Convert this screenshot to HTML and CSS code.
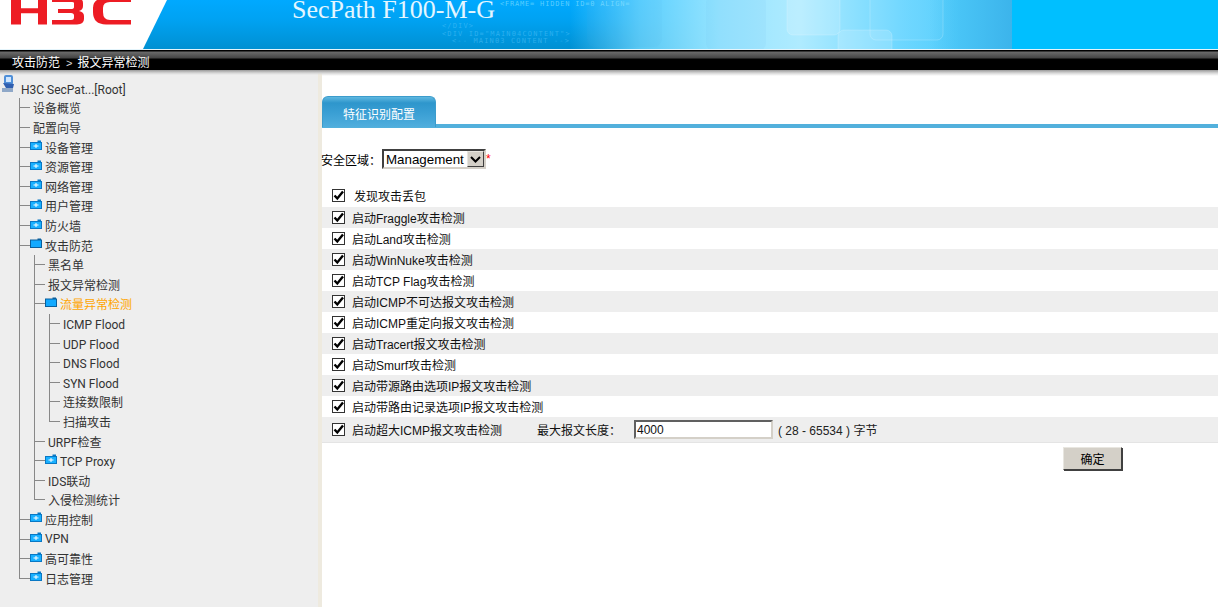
FILE: index.html
```html
<!DOCTYPE html>
<html lang="zh">
<head>
<meta charset="utf-8">
<title>SecPath F100-M-G</title>
<link rel="stylesheet" href="styles.css">
</head>
<body>
<svg class="defs" width="0" height="0" aria-hidden="true">
  <symbol id="closed" viewBox="0 0 12 10">
    <path d="M0 2h7.500V0.500h3.500V2h1v8H0z" fill="#0a78c4"/>
    <path d="M1 3h10v6H1z" fill="#19b0ff"/>
    <path d="M3.500 6h5M6 4v4" stroke="#fff" stroke-width="1" fill="none"/>
  </symbol>
  <symbol id="open" viewBox="0 0 12 10">
    <path d="M0 1.500h7.500V0.500h3.500v1h1V10H0z" fill="#0a5f9c"/>
    <path d="M1 2.500h10V9H1z" fill="#12a9ff"/>
  </symbol>
  <symbol id="tick" viewBox="0 0 11 11">
    <path d="M1.500 5.500l2.800 3L10 1.500" fill="none" stroke="#000" stroke-width="2.400"/>
  </symbol>
</svg>
<header class="banner">
  <div class="logo-area">
    <svg class="logo" viewBox="0 0 140 26" width="140" height="26" aria-label="H3C">
      <path d="M11-2h10V8.300h17V-2h9v26.400h-9V13.300H21v11.100H11z" fill="#ed1c24"/>
      <path d="M52-2h24q7 0 7 5v3q0 4-4 5 5 1 5 5v3q0 5.400-7 5.400H52v-4.400h19q3 0 3-2.500v-2q0-2.500-3-2.500H58V9h13q3 0 3-2V3q0-1-2-1H52z" fill="#ed1c24"/>
      <path d="M131-2H106Q93-2 93 8v4q0 12.400 13 12.400h25V20H110q-7 0-7-8V8q0-6 7-6h21z" fill="#ed1c24"/>
    </svg>
  </div>
  <div class="art">
    <svg class="art-shapes" width="500" height="49" aria-hidden="true">
      <rect class="shade" x="67" y="-5" width="75" height="52" rx="8"/>
      <rect class="shade" x="186" y="-5" width="60" height="56" rx="8"/>
      <rect class="glow" x="267" y="-10" width="53" height="45" rx="6"/>
      <rect class="glow" x="318" y="30" width="54" height="30" rx="6"/>
      <rect class="line" x="350" y="-10" width="73" height="50" rx="6"/>
    </svg>
    <div class="code-top">&lt;FRAME= HIDDEN ID=0 ALIGN=</div>
    <div class="code-text">
      <div>&lt;/DIV&gt;</div>
      <div>&lt;DIV ID="MAIN04CONTENT"&gt;</div>
      <div class="indent">&lt;-- MAIN03 CONTENT --&gt;</div>
    </div>
    <div class="device">SecPath F100-M-G</div>
  </div>
</header>
<nav class="crumbs"><span>攻击防范</span><span class="sep">&gt;</span><span>报文异常检测</span></nav>
<div class="layout">
  <aside class="sidebar">
    <div class="root-row">
      <svg class="root-icon" viewBox="0 0 12 17" width="12" height="17" aria-hidden="true">
        <rect x="2" y="0" width="9" height="10" rx="2" fill="#4f8fd8"/>
        <rect x="4" y="2" width="5" height="5" fill="#cfe6ff"/>
        <path d="M1 8l3 5h7l1-4z" fill="#2f5fb0"/>
        <path d="M0 13h11v4H0z" fill="#8fa8c8"/>
      </svg>
      <span class="root-label">H3C SecPat...[Root]</span>
    </div>
    <ul class="tree lvl1">
      <li><div class="row"><span class="txt">设备概览</span></div></li>
      <li><div class="row"><span class="txt">配置向导</span></div></li>
      <li><div class="row"><svg class="fld"><use href="#closed"/></svg><span class="txt">设备管理</span></div></li>
      <li><div class="row"><svg class="fld"><use href="#closed"/></svg><span class="txt">资源管理</span></div></li>
      <li><div class="row"><svg class="fld"><use href="#closed"/></svg><span class="txt">网络管理</span></div></li>
      <li><div class="row"><svg class="fld"><use href="#closed"/></svg><span class="txt">用户管理</span></div></li>
      <li><div class="row"><svg class="fld"><use href="#closed"/></svg><span class="txt">防火墙</span></div></li>
      <li>
        <div class="row"><svg class="fld"><use href="#open"/></svg><span class="txt">攻击防范</span></div>
        <ul class="tree lvl2">
          <li><div class="row"><span class="txt">黑名单</span></div></li>
          <li><div class="row"><span class="txt">报文异常检测</span></div></li>
          <li>
            <div class="row"><svg class="fld"><use href="#open"/></svg><span class="txt active">流量异常检测</span></div>
            <ul class="tree lvl3">
              <li><div class="row"><span class="txt latin">ICMP Flood</span></div></li>
              <li><div class="row"><span class="txt latin">UDP Flood</span></div></li>
              <li><div class="row"><span class="txt latin">DNS Flood</span></div></li>
              <li><div class="row"><span class="txt latin">SYN Flood</span></div></li>
              <li><div class="row"><span class="txt">连接数限制</span></div></li>
              <li><div class="row"><span class="txt">扫描攻击</span></div></li>
            </ul>
          </li>
          <li><div class="row"><span class="txt">URPF检查</span></div></li>
          <li><div class="row"><svg class="fld"><use href="#closed"/></svg><span class="txt latin">TCP Proxy</span></div></li>
          <li><div class="row"><span class="txt">IDS联动</span></div></li>
          <li><div class="row"><span class="txt">入侵检测统计</span></div></li>
        </ul>
      </li>
      <li><div class="row"><svg class="fld"><use href="#closed"/></svg><span class="txt">应用控制</span></div></li>
      <li><div class="row"><svg class="fld"><use href="#closed"/></svg><span class="txt">VPN</span></div></li>
      <li><div class="row"><svg class="fld"><use href="#closed"/></svg><span class="txt">高可靠性</span></div></li>
      <li><div class="row"><svg class="fld"><use href="#closed"/></svg><span class="txt">日志管理</span></div></li>
    </ul>
  </aside>
  <div class="splitter"></div>
  <main class="content">
    <div class="tabbar"><div class="tab">特征识别配置</div></div>
    <div class="zone">
      <label class="zone-label" for="zone">安全区域：</label>
      <div class="select" id="zone"><span class="select-val">Management</span><span class="select-btn"><svg viewBox="0 0 11 7" width="11" height="7" aria-hidden="true"><path d="M1 1l4.500 4.500L10 1" fill="none" stroke="#000" stroke-width="2"/></svg></span></div>
      <span class="req">*</span>
    </div>
    <div class="checks">
      <div class="chk-row top"><span class="cb"><svg class="tick"><use href="#tick"/></svg></span><span class="first">发现攻击丢包</span></div>
      <div class="chk-row alt"><span class="cb"><svg class="tick"><use href="#tick"/></svg></span><span>启动Fraggle攻击检测</span></div>
      <div class="chk-row"><span class="cb"><svg class="tick"><use href="#tick"/></svg></span><span>启动Land攻击检测</span></div>
      <div class="chk-row alt"><span class="cb"><svg class="tick"><use href="#tick"/></svg></span><span>启动WinNuke攻击检测</span></div>
      <div class="chk-row"><span class="cb"><svg class="tick"><use href="#tick"/></svg></span><span>启动TCP Flag攻击检测</span></div>
      <div class="chk-row alt"><span class="cb"><svg class="tick"><use href="#tick"/></svg></span><span>启动ICMP不可达报文攻击检测</span></div>
      <div class="chk-row"><span class="cb"><svg class="tick"><use href="#tick"/></svg></span><span>启动ICMP重定向报文攻击检测</span></div>
      <div class="chk-row alt"><span class="cb"><svg class="tick"><use href="#tick"/></svg></span><span>启动Tracert报文攻击检测</span></div>
      <div class="chk-row"><span class="cb"><svg class="tick"><use href="#tick"/></svg></span><span>启动Smurf攻击检测</span></div>
      <div class="chk-row alt"><span class="cb"><svg class="tick"><use href="#tick"/></svg></span><span>启动带源路由选项IP报文攻击检测</span></div>
      <div class="chk-row"><span class="cb"><svg class="tick"><use href="#tick"/></svg></span><span>启动带路由记录选项IP报文攻击检测</span></div>
      <div class="chk-row alt last"><span class="cb"><svg class="tick"><use href="#tick"/></svg></span><span class="long">启动超大ICMP报文攻击检测</span><span class="maxlen">最大报文长度：</span><span class="input">4000</span><span class="range">( 28 - 65534 ) 字节</span></div>
    </div>
    <div class="actions"><button class="ok" type="button">确定</button></div>
  </main>
</div>
</body>
</html>
```
FILE: styles.css
```css
* { box-sizing: border-box; }
html, body { margin: 0; padding: 0; height: 100%; overflow: hidden; }
body { background: #fff; font: 12px "Liberation Sans", "Noto Sans CJK SC", sans-serif; color: #111; display: flex; flex-direction: column; height: 607px; }
.defs { position: absolute; }
ul { list-style: none; margin: 0; padding: 0; }

.banner { height: 50px; flex: none; display: flex; background: #00bfff; border-bottom: 1px solid #e4f4fb; overflow: hidden; position: relative; }
.logo-area { position: absolute; left: 0; top: 0; bottom: 0; width: 170px; background: #fff; }
.logo { display: block; }
.art { width: 1012px; height: 49px; position: relative; clip-path: polygon(167px 0, 1012px 0, 1012px 49px, 143px 49px);
  background:
    linear-gradient(90deg, rgba(60,180,235,0) 930px, rgba(60,180,235,.85) 1000px, rgba(60,180,235,1) 1012px),
    linear-gradient(90deg, rgba(120,220,255,0) 570px, rgba(120,220,255,.75) 640px, rgba(150,228,255,1) 720px, rgba(175,235,255,1) 800px, rgba(110,215,255,1) 900px, rgba(80,205,252,1) 960px),
    linear-gradient(180deg, #00a9ff 0, #00a2f2 20px, #0090d2 49px); }
.art-shapes { position: absolute; left: 520px; top: 0; }
.shade { fill: #4fa8e0; fill-opacity: .07; }
.glow { fill: #fff; fill-opacity: .16; stroke: #fff; stroke-opacity: .18; }
.line { fill: #fff; fill-opacity: .04; stroke: #fff; stroke-opacity: .2; }
.device { position: absolute; left: 292px; top: -2px; font: 26px/24px "Liberation Serif", serif; color: #e4f6ff; white-space: nowrap; }
.code-top { position: absolute; left: 500px; top: 0; font: 7px/8px "DejaVu Sans Mono", monospace; letter-spacing: .8px; color: rgba(150,230,255,.6); white-space: nowrap; }
.code-text { position: absolute; left: 442px; top: 23px; font: 7px/7.500px "DejaVu Sans Mono", monospace; letter-spacing: 1.150px; color: rgba(100,205,255,.45); white-space: nowrap; }
.indent { margin-left: 10px; }

.crumbs { flex: none; height: 20px; padding: 5px 0 0 12px; display: flex; gap: 6px; align-items: center; color: #fff; line-height: 12px;
  background: linear-gradient(180deg, #000 0, #000 1px, #6a6a6a 2px, #444 8px, #000 9px, #000 100%); }
.crumbs .sep { color: #ddd; font-size: 11px; margin-right: -1px; }

.layout { flex: 1; display: flex; min-height: 0; }
.sidebar { width: 318px; flex: none; background: linear-gradient(180deg, #999 0, #d6d6d6 3px, #eee 5px); padding: 5px 0 0 0; font: 12px Roboto, "Noto Sans CJK SC", sans-serif; color: #333; }
.splitter { width: 4px; flex: none; background: linear-gradient(180deg, #999 0, #d6d6d6 3px, rgba(238,234,223,1) 5px); }
.root-row { height: 23.200px; display: flex; align-items: flex-start; padding-left: 2px; }
.root-icon { flex: none; }
.root-label { margin-left: 7px; margin-top: 7px; line-height: 17px; }

.tree > li { position: relative; }
.tree .row { height: 19.600px; display: flex; align-items: center; position: relative; white-space: nowrap; }
.tree > li::before { content: ""; position: absolute; left: 0; top: 0; bottom: 0; width: 1px; background: #888; }
.tree > li:last-child::before { bottom: auto; height: 9.800px; }
.tree > li > .row::before { content: ""; width: 11px; height: 1px; background: #888; flex: none; }
.lvl1 { margin-left: 19px; }
.lvl2 { margin-left: 15px; }
.lvl3 { margin-left: 15px; }
.txt { margin-left: 3px; }
.latin { margin-top: 3px; }
.fld { width: 12px; height: 10px; flex: none; margin-top: -4px; }
.fld + .txt { margin-left: 3px; }
.active { color: #ffa500; }

.content { flex: 1; min-width: 0; padding-top: 26px; background: linear-gradient(180deg, #999 0, #d6d6d6 3px, #f2f2f2 5px, #fff 6px) no-repeat; }
.tabbar { height: 32px; border-bottom: 4px solid #52b0dc; }
.tab { width: 114px; height: 31px; background: linear-gradient(180deg, #5fb8e0 0, #2e96cc 6px, #3a9fd4 16px, #50aedd 100%); border: 1px solid #3c9ccc; border-bottom: 0; border-radius: 6px 6px 0 0; color: #fff; text-align: center; line-height: 37px; font-size: 12px; }
.zone { display: flex; align-items: center; height: 20px; margin-top: 21px; white-space: nowrap; color: #000; }
.zone-label { margin-left: -1px; margin-right: 1px; }
.select { width: 104px; height: 20px; display: flex; align-items: center; justify-content: space-between; border: 2px solid; border-color: #404040 #d4d0c8 #d4d0c8 #404040; padding: 0 0 0 2px; background: #fff; }
.select-val { font-size: 13.330px; }
.select-btn { width: 17px; height: 16px; background: #d4d0c8; border: 1px solid; border-color: #e8e6e0 #404040 #404040 #e8e6e0; display: flex; align-items: center; justify-content: center; }
.req { color: #f00; font-size: 12px; }
.checks { margin-top: 16px; }
.chk-row { height: 21px; display: flex; align-items: center; padding-left: 10px; white-space: nowrap; color: #111; }
.chk-row.top { height: 22px; padding-bottom: 2px; }
.chk-row.alt { background: #eee; }
.chk-row.last { height: 26px; border-bottom: 1px solid #e4e4e4; }
.cb { width: 13px; height: 13px; flex: none; margin-right: 7px; border: 1px solid #333; background: #fff; display: flex; }
.tick { width: 11px; height: 11px; display: block; }
.first { margin-left: 2px; }
.long { width: 185px; }
.maxlen { width: 97px; }
.input { width: 139px; height: 19px; border: 2px solid; border-color: #606060 #d4d0c8 #d4d0c8 #606060; background: #fff; line-height: 17px; padding-left: 1px; font-size: 12px; margin-right: 5px; }
.range { color: #222; }
.actions { display: flex; justify-content: flex-end; padding: 4px 96px 0 0; }
.ok { width: 59px; height: 23px; padding: 0; background: #d4d0c8; border: 1px solid; border-color: #e8e6e0 #404040 #404040 #e8e6e0; box-shadow: 1px 1px 0 #404040; font: 12px "Liberation Sans", "Noto Sans CJK SC", sans-serif; color: #000; }
```
